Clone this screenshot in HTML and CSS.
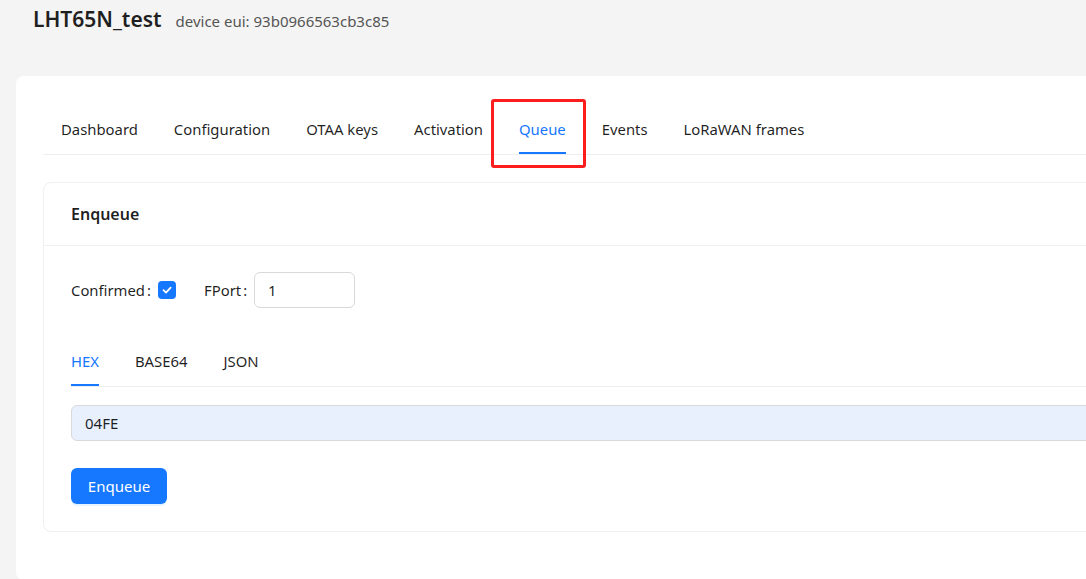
FILE: index.html
```html
<!DOCTYPE html>
<html lang="en">
  <head>
    <meta charset="UTF-8" />
    <meta name="viewport" content="width=device-width, initial-scale=1.0" />
    <title>LHT65N_test</title>
    <link rel="stylesheet" href="styles.css">
  </head>
  <body>
    <div class="page">
      <div class="page-header">
        <h1>LHT65N_test</h1>
        <span class="sub">device eui: 93b0966563cb3c85</span>
      </div>

      <div class="main-card">
        <div class="tabs">
          <div class="tab">Dashboard</div>
          <div class="tab">Configuration</div>
          <div class="tab">OTAA keys</div>
          <div class="tab">Activation</div>
          <div class="tab active">Queue<span class="highlight"></span></div>
          <div class="tab">Events</div>
          <div class="tab">LoRaWAN frames</div>
        </div>

        <div class="card">
          <div class="card-head">Enqueue</div>
          <div class="card-body">
            <div class="form-row">
              <label class="field-label">Confirmed<span class="colon">:</span></label>
              <span class="checkbox">
                <svg width="12" height="12" viewBox="0 0 12 12"><path d="M2.5 6.2 L5 8.6 L9.6 3.6" fill="none" stroke="#fff" stroke-width="1.8" stroke-linecap="round" stroke-linejoin="round"/></svg>
              </span>
              <label class="field-label fport">FPort<span class="colon">:</span></label>
              <input class="text-input small" type="text" value="1" />
            </div>

            <div class="sub-tabs">
              <div class="sub-tab active">HEX</div>
              <div class="sub-tab">BASE64</div>
              <div class="sub-tab">JSON</div>
            </div>

            <input class="text-input payload" type="text" value="04FE" />

            <button class="btn-primary">Enqueue</button>
          </div>
        </div>
      </div>
    </div>
  </body>
</html>
```

FILE: styles.css
```css
body {
  margin: 0;
  background-color: #f4f4f4;
  font-family: "Noto Sans", "Open Sans", sans-serif;
  color: rgba(0, 0, 0, 0.88);
  overflow: hidden;
}

.page {
  width: 1300px;
}

.page-header {
  display: flex;
  align-items: baseline;
  padding: 5px 33px 0;
  height: 71px;
}

h1 {
  margin: 0;
  font-size: 21px;
  font-weight: 600;
  color: #1f1f1f;
}

.sub {
  margin-left: 14px;
  font-size: 15px;
  color: #555;
}

.main-card {
  background: white;
  margin-left: 16px;
  border-radius: 8px;
  padding: 25px 27px 48px;
}

.tabs {
  display: flex;
  border-bottom: 1px solid #eeeeee;
  height: 53px;
}

.tab {
  position: relative;
  margin: 0 18px;
  padding-top: 4px;
  line-height: 49px;
  font-size: 14.85px;
}

.tab.active {
  color: #1677ff;
}

.tab.active::after {
  content: "";
  position: absolute;
  left: 0;
  right: 0;
  bottom: 0;
  height: 2px;
  background: #1677ff;
}

.highlight {
  position: absolute;
  left: -28px;
  right: -20px;
  top: -2px;
  bottom: -14px;
  border: 3px solid #fe1d1d;
  border-radius: 3px;
}

.card {
  margin-top: 27px;
  border: 1px solid #f0f0f0;
  border-radius: 8px;
}

.card-head {
  height: 62px;
  line-height: 62px;
  padding: 0 27px;
  border-bottom: 1px solid #f0f0f0;
  font-size: 16px;
  font-weight: 600;
}

.card-body {
  padding: 26px 27px 27px;
}

.form-row {
  display: flex;
  align-items: center;
  height: 36px;
}

.field-label {
  font-size: 14.85px;
}

.colon {
  margin: 0 7px 0 2px;
}

.fport {
  margin-left: 28px;
}

.checkbox {
  display: flex;
  align-items: center;
  justify-content: center;
  width: 18px;
  height: 18px;
  background: #1677ff;
  border-radius: 4px;
}

.text-input {
  box-sizing: border-box;
  font-family: inherit;
  font-size: 15px;
  color: rgba(0, 0, 0, 0.88);
  border: 1px solid #d9d9d9;
  border-radius: 6px;
  outline: none;
}

.text-input.small {
  width: 101px;
  height: 36px;
  padding: 0 13px;
}

.sub-tabs {
  display: flex;
  gap: 36px;
  margin-top: 32px;
  border-bottom: 1px solid #eeeeee;
}

.sub-tab {
  position: relative;
  font-size: 14.85px;
  line-height: 22px;
  padding: 10px 0 14px;
}

.sub-tab.active {
  color: #1677ff;
}

.sub-tab.active::after {
  content: "";
  position: absolute;
  left: 0;
  right: 0;
  bottom: 0;
  height: 2px;
  background: #1677ff;
}

.text-input.payload {
  display: block;
  width: 100%;
  height: 36px;
  margin-top: 18px;
  padding: 0 13px;
  background: #e8f0fe;
}

.btn-primary {
  display: block;
  margin-top: 27px;
  width: 96px;
  height: 36px;
  border: none;
  border-radius: 6px;
  background: #1677ff;
  color: white;
  font-family: inherit;
  font-size: 15px;
  box-shadow: 0 2px 0 rgba(5, 145, 255, 0.1);
}
```
